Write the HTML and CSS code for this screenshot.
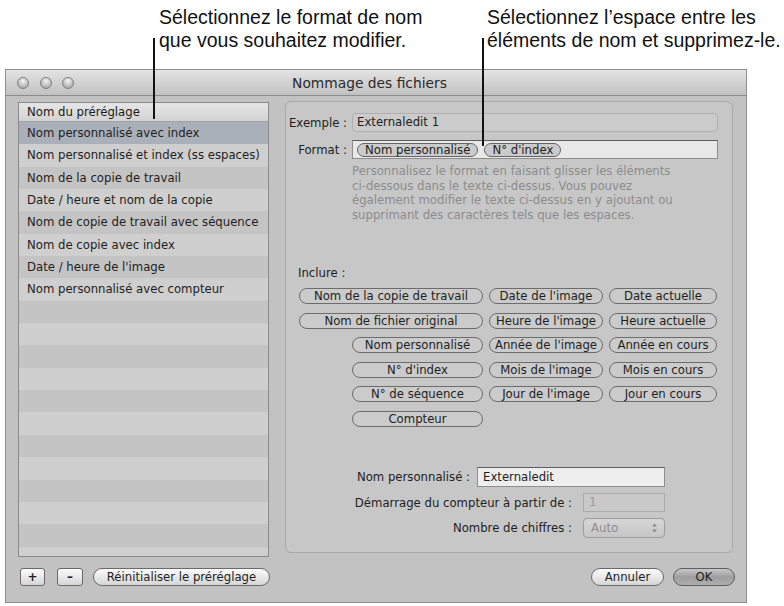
FILE: index.html
```html
<!DOCTYPE html>
<html lang="fr">
<head>
    <meta charset="UTF-8">
    <meta name="viewport" content="width=device-width, initial-scale=1.0">
    <title>Nommage des fichiers</title>
    <link rel="stylesheet" href="styles.css">
</head>
<body>
<div class="page">
    <div class="callouts">
        <p class="callout callout-left">Sélectionnez le format de nom<br>que vous souhaitez modifier.</p>
        <p class="callout callout-right">Sélectionnez l’espace entre les<br>éléments de nom et supprimez-le.</p>
    </div>
    <span class="leader leader-left"></span>
    <span class="leader leader-right"></span>

    <div class="window">
        <div class="titlebar">
            <div class="lights"><span></span><span></span><span></span></div>
            <div class="title">Nommage des fichiers</div>
            <div></div>
        </div>

        <div class="content">
            <div class="preset-list">
                <div class="list-header">Nom du préréglage</div>
                <ul class="rows">
                    <li class="selected">Nom personnalisé avec index</li>
                    <li>Nom personnalisé et index (ss espaces)</li>
                    <li>Nom de la copie de travail</li>
                    <li>Date / heure et nom de la copie</li>
                    <li>Nom de copie de travail avec séquence</li>
                    <li>Nom de copie avec index</li>
                    <li>Date / heure de l'image</li>
                    <li>Nom personnalisé avec compteur</li>
                    <li></li><li></li><li></li><li></li><li></li><li></li>
                    <li></li><li></li><li></li><li></li><li></li><li></li>
                </ul>
            </div>

            <div class="group">
                <div class="field-row">
                    <label class="field-label">Exemple :</label>
                    <div class="field example">Externaledit 1</div>
                </div>
                <div class="field-row format-row">
                    <label class="field-label">Format :</label>
                    <div class="field format">
                        <span class="token">Nom personnalisé</span>
                        <span class="token">N° d'index</span>
                    </div>
                </div>
                <p class="help">Personnalisez le format en faisant glisser les éléments<br>ci-dessous dans le texte ci-dessus. Vous pouvez<br>également modifier le texte ci-dessus en y ajoutant ou<br>supprimant des caractères tels que les espaces.</p>

                <div class="include-label">Inclure :</div>
                <div class="tokens">
                    <span class="pill">Nom de la copie de travail</span>
                    <span class="pill">Date de l'image</span>
                    <span class="pill">Date actuelle</span>

                    <span class="pill">Nom de fichier original</span>
                    <span class="pill">Heure de l'image</span>
                    <span class="pill">Heure actuelle</span>

                    <span class="pill short">Nom personnalisé</span>
                    <span class="pill">Année de l'image</span>
                    <span class="pill">Année en cours</span>

                    <span class="pill short">N° d'index</span>
                    <span class="pill">Mois de l'image</span>
                    <span class="pill">Mois en cours</span>

                    <span class="pill short">N° de séquence</span>
                    <span class="pill">Jour de l'image</span>
                    <span class="pill">Jour en cours</span>

                    <span class="pill short">Compteur</span>
                </div>

                <div class="options">
                    <div class="opt-row">
                        <label>Nom personnalisé :</label>
                        <div class="input wide">Externaledit</div>
                    </div>
                    <div class="opt-row narrow">
                        <label>Démarrage du compteur à partir de :</label>
                        <div class="input disabled">1</div>
                    </div>
                    <div class="opt-row narrow">
                        <label>Nombre de chiffres :</label>
                        <div class="popup">
                            <span>Auto</span>
                            <svg width="7" height="12" viewBox="0 0 7 12">
                                <path d="M3.5 1.5 L6 4.5 L1 4.5 Z" fill="#8a8a8a"/>
                                <path d="M3.5 10.5 L6 7.5 L1 7.5 Z" fill="#8a8a8a"/>
                            </svg>
                        </div>
                    </div>
                </div>
            </div>
        </div>

        <div class="buttons">
            <button class="sq plus">+</button>
            <button class="sq minus">–</button>
            <button class="push reset">Réinitialiser le préréglage</button>
            <div class="dialog-actions">
                <button class="push cancel">Annuler</button>
                <button class="push ok">OK</button>
            </div>
        </div>
    </div>
</div>
</body>
</html>
```

FILE: styles.css
```css
* {
    margin: 0;
    padding: 0;
    box-sizing: border-box;
}

body {
    background: #fff;
    font-family: "DejaVu Sans", sans-serif;
    font-size: 11.7px;
    color: #1e1e1e;
}

.page {
    position: relative;
    width: 784px;
    height: 606px;
    overflow: hidden;
}

/* annotations above the dialog */
.callouts {
    display: flex;
    height: 69px;
    padding-top: 6px;
    font-family: "Liberation Sans", Arial, sans-serif;
    font-size: 19.5px;
    line-height: 23px;
    color: #111;
}

.callout-left {
    margin-left: 159px;
    width: 328px;
}

.leader {
    position: absolute;
    z-index: 2;
    width: 1.5px;
    background: #111;
}

.leader-left {
    left: 153px;
    top: 38px;
    height: 81px;
}

.leader-right {
    left: 482px;
    top: 38px;
    height: 108px;
}

/* dialog window */
.window {
    margin-left: 5px;
    width: 742px;
    height: 534px;
    border: 1px solid #8f8f8f;
    background: #c2c2c2;
    display: flex;
    flex-direction: column;
}

.titlebar {
    height: 26px;
    display: grid;
    grid-template-columns: 1fr auto 1fr;
    align-items: center;
    padding-left: 11px;
    background: linear-gradient(#e3e3e3, #c1c1c1);
    border-bottom: 1px solid #8c8c8c;
}

.lights {
    display: flex;
    gap: 10.5px;
}

.lights span {
    width: 12px;
    height: 12px;
    border-radius: 50%;
    border: 1px solid #7f7f7f;
    background: radial-gradient(circle at 50% 30%, #f4f4f4, #bcbcbc 60%, #9d9d9d);
}

.title {
    margin-right: 24px;
    font-size: 13.8px;
    color: #2a2a2a;
}

.content {
    display: flex;
    align-items: flex-start;
    gap: 16px;
    padding: 5px 13px 0 12px;
}

/* preset list */
.preset-list {
    width: 251px;
    height: 455px;
    margin-top: 1px;
    border: 1px solid #8a8a8a;
    background: #c5c5c5;
    overflow: hidden;
}

.list-header {
    height: 19px;
    line-height: 18px;
    padding-left: 8px;
    background: linear-gradient(#e6e6e6, #d3d3d3);
    border-bottom: 1px solid #a2a2a2;
    color: #1a1a1a;
}

.rows {
    list-style: none;
}

.rows li {
    height: 22.35px;
    line-height: 22.35px;
    padding-left: 8px;
    white-space: nowrap;
    background: #c4c4c4;
}

.rows li:nth-child(even) {
    background: #cfcfcf;
}

.rows li.selected {
    background: #a9b0ba;
}

/* right-hand group box */
.group {
    width: 448px;
    height: 452px;
    border: 1px solid #a9a9a9;
    border-radius: 6px;
    background: #c7c7c7;
    display: flex;
    flex-direction: column;
    padding: 11px 14px 14px 0;
}

.field-row {
    display: flex;
    align-items: center;
    gap: 5px;
}

.format-row {
    margin-top: 8px;
}

.field-label {
    width: 61px;
    text-align: right;
    color: #1e1e1e;
}

.field {
    width: 366px;
    height: 19px;
}

.example {
    line-height: 17px;
    padding-left: 4px;
    background: #cbcbcb;
    border: 1px solid #b1b1b1;
    border-radius: 4px;
}

.format {
    display: flex;
    align-items: center;
    gap: 6px;
    padding: 0 4px;
    background: #e8e8e8;
    border: 1px solid #8d8d8d;
    border-top-color: #5e5e5e;
}

.token {
    height: 14px;
    line-height: 12px;
    padding: 0 7px;
    border: 1px solid #666;
    border-radius: 7px;
    background: #cbcbcb;
}

.help {
    margin: 5px 0 0 66px;
    line-height: 14.5px;
    color: #8c8c8c;
}

.include-label {
    margin-top: 44px;
    padding-left: 12px;
    line-height: 14px;
}

.tokens {
    margin-top: 8px;
    padding-left: 13px;
    display: grid;
    grid-template-columns: 184px 114px 108px;
    column-gap: 6px;
    row-gap: 8.5px;
}

.pill {
    height: 16px;
    line-height: 14px;
    text-align: center;
    white-space: nowrap;
    border: 1px solid #6c6c6c;
    border-radius: 8px;
    background: #cbcbcb;
    color: #1e1e1e;
}

.pill.short {
    grid-column: 1;
    width: 131px;
    justify-self: end;
}

.options {
    margin-top: auto;
    margin-right: 53px;
    display: flex;
    flex-direction: column;
    gap: 5.5px;
}

.opt-row {
    display: flex;
    justify-content: flex-end;
    align-items: center;
    gap: 7px;
    height: 20px;
}

.opt-row.narrow {
    gap: 11px;
}

.input {
    height: 20px;
    line-height: 18px;
    padding-left: 5px;
}

.input.wide {
    width: 188px;
    background: #eeeeee;
    border: 1px solid #8e8e8e;
    border-top-color: #5c5c5c;
}

.input.disabled {
    width: 82px;
    height: 19px;
    line-height: 17px;
    color: #9a9a9a;
    background: #c9c9c9;
    border: 1px solid #ababab;
}

.popup {
    width: 82px;
    height: 20px;
    display: flex;
    justify-content: space-between;
    align-items: center;
    padding: 0 6px 0 7px;
    color: #8e8e8e;
    background: linear-gradient(#d6d6d6, #c6c6c6);
    border: 1px solid #9c9c9c;
    border-radius: 4px;
}

/* bottom button bar */
.buttons {
    display: flex;
    align-items: center;
    margin-top: 11px;
    padding: 0 11px 0 14px;
}

button {
    font-family: "DejaVu Sans", sans-serif;
    font-size: 11.7px;
    color: #1e1e1e;
    height: 18px;
    line-height: 16px;
    border: 1px solid #6a6a6a;
    background: linear-gradient(#fbfbfb, #d6d6d6);
}

.sq {
    width: 25px;
    border-radius: 3px;
    font-weight: bold;
    font-size: 12px;
}

.minus {
    width: 26px;
    margin-left: 12px;
}

.push {
    border-radius: 9px;
}

.reset {
    width: 177px;
    margin-left: 10px;
}

.dialog-actions {
    margin-left: auto;
    display: flex;
    gap: 9px;
}

.cancel {
    width: 73px;
}

.ok {
    width: 62px;
    border-color: #5d5d5d;
    background: linear-gradient(#c8c8c8, #9e9e9e 50%, #aeaeae);
}
```
